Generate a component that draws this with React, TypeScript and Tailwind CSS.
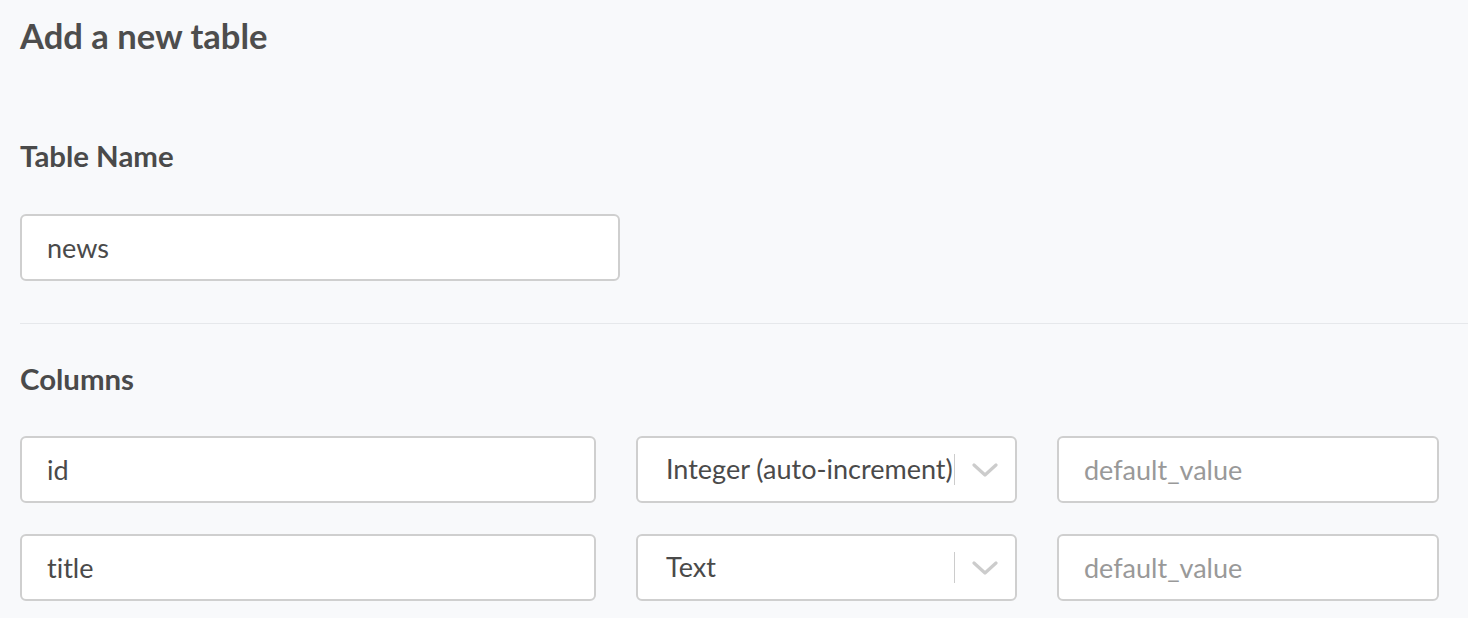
import React from "react"

function Chevron() {
  return (
    <svg width="26" height="14" viewBox="0 0 26 14" fill="none" className="block">
      <path d="M2 2 L13 12 L24 2" stroke="#cccccc" strokeWidth="3.2" strokeLinecap="round" strokeLinejoin="round" />
    </svg>
  )
}

function TextField({ value, placeholder, className }: { value?: string; placeholder?: string; className: string }) {
  return (
    <input
      readOnly
      value={value ?? ""}
      placeholder={placeholder}
      className={`${className} h-[67px] rounded-[6px] border-2 border-[#cfcfcf] bg-white pl-[25px] text-[27px] text-[#4a4a4a] outline-none [font-variant-ligatures:none] placeholder:text-[#999999]`}
    />
  )
}

function TypeSelect({ label }: { label: string }) {
  return (
    <div className="flex h-[67px] w-[381px] items-center rounded-[6px] border-2 border-[#cfcfcf] bg-white pl-[28px]">
      <span className="min-w-0 flex-1 whitespace-nowrap text-[27px] text-[#4a4a4a]">{label}</span>
      <span className="h-[31px] w-px bg-[#cccccc]" />
      <span className="flex w-[60px] items-center justify-center">
        <Chevron />
      </span>
    </div>
  )
}

export default function App() {
  const columns = [
    { name: "id", type: "Integer (auto-increment)" },
    { name: "title", type: "Text" },
  ]

  return (
    <div className="min-h-screen w-full bg-[#f8f9fb] pt-[14px] pl-5 font-['Lato',sans-serif] text-[#4a4a4a] [font-variant-ligatures:none]">
      <h1 className="text-[34.6px] leading-[44px] font-bold text-[#4d4d4d]">Add a new table</h1>

      <h2 className="mt-[80px] text-[29.4px] leading-[36px] font-bold">Table Name</h2>
      <TextField value="news" className="mt-[40px] block w-[600px]" />

      <hr className="mt-[42px] border-t border-[#e6e8eb]" />

      <h2 className="mt-[37px] text-[29.4px] leading-[36px] font-bold">Columns</h2>
      <div className="mt-[39px] flex flex-col gap-[31px]">
        {columns.map((col) => (
          <div key={col.name} className="flex gap-[40px]">
            <TextField value={col.name} className="w-[576px]" />
            <TypeSelect label={col.type} />
            <TextField placeholder="default_value" className="w-[382px]" />
          </div>
        ))}
      </div>
    </div>
  )
}
